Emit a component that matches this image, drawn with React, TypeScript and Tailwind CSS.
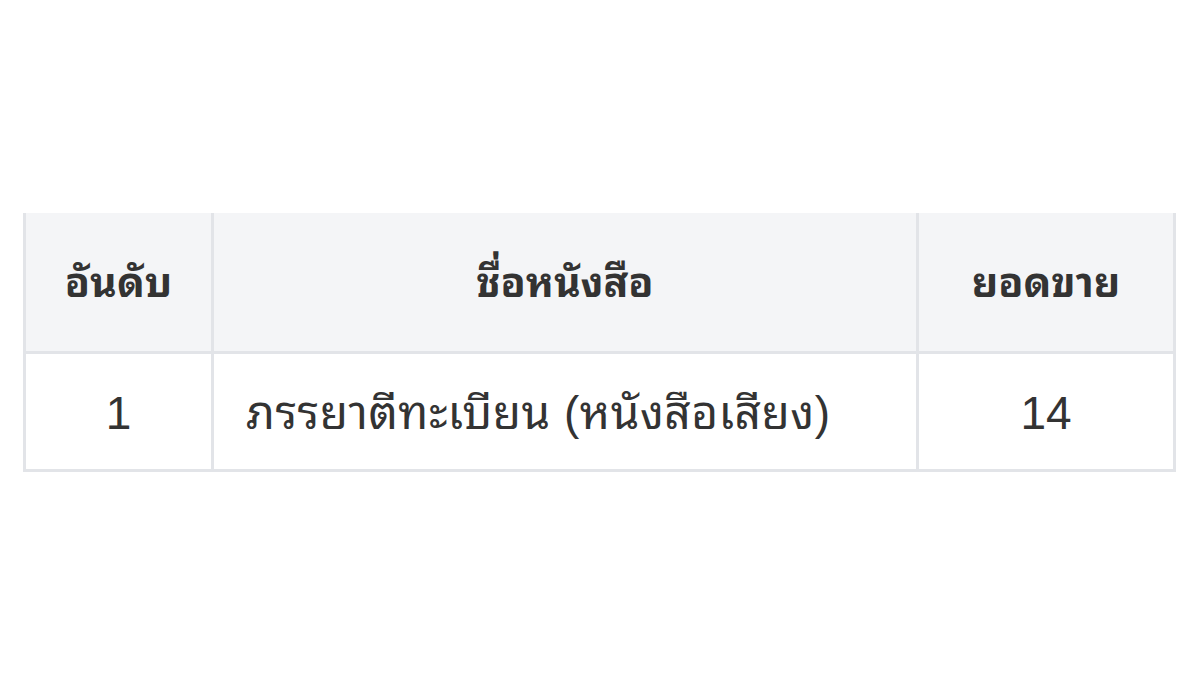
export default function App() {
  const rows = [{ rank: 1, title: "ภรรยาตีทะเบียน (หนังสือเสียง)", sales: 14 }];
  return (
    <div
      className="min-h-[674px] w-full bg-white pt-[213px] pl-[23px]"
      style={{ fontFamily: '"Liberation Sans", "Noto Sans Thai Looped", "Noto Sans Thai", "Noto Sans", sans-serif' }}
    >
      <table className="w-[1153px] border-collapse text-[#333333]">
        <thead>
          <tr className="bg-[#f4f5f7]">
            <th className="h-[139px] w-[188px] border-x-[3px] border-b-[3px] border-[#e2e4e8] pt-[4px] text-center text-[41px] font-bold">
              อันดับ
            </th>
            <th className="border-x-[3px] border-b-[3px] border-[#e2e4e8] pt-[4px] text-center text-[41px] font-bold">
              ชื่อหนังสือ
            </th>
            <th className="w-[257px] border-x-[3px] border-b-[3px] border-[#e2e4e8] pt-[4px] text-center text-[41px] font-bold">
              ยอดขาย
            </th>
          </tr>
        </thead>
        <tbody>
          {rows.map((r) => (
            <tr key={r.rank}>
              <td className="h-[118px] border-[3px] border-[#e2e4e8] pt-[4px] text-center text-[46px]">{r.rank}</td>
              <td className="border-[3px] border-[#e2e4e8] pl-[32px] pt-[4px] text-left text-[46px] tracking-[0.5px]">
                {r.title}
              </td>
              <td className="border-[3px] border-[#e2e4e8] pt-[4px] text-center text-[46px]">{r.sales}</td>
            </tr>
          ))}
        </tbody>
      </table>
    </div>
  );
}
